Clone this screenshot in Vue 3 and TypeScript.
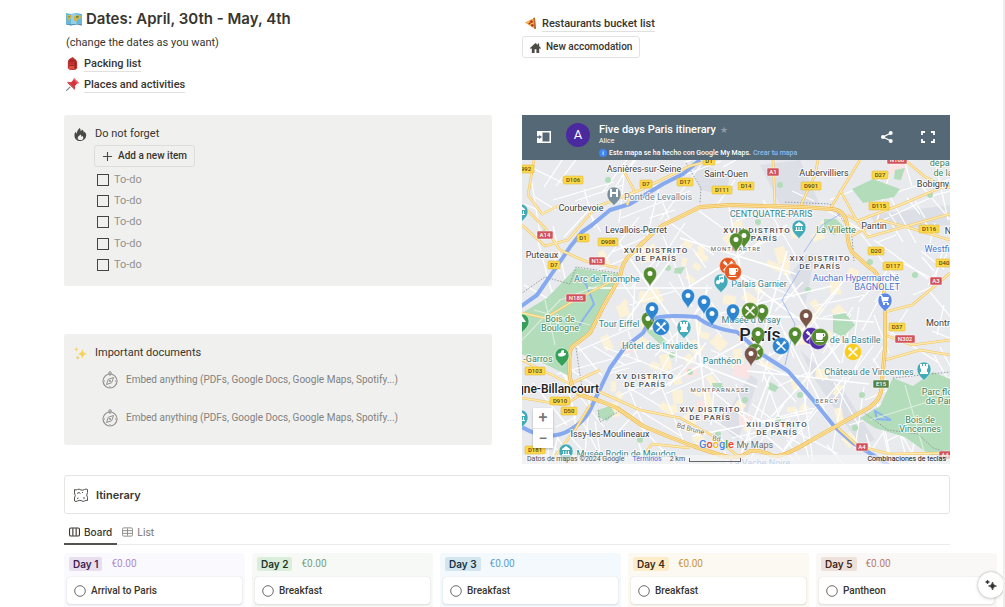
<script setup lang="ts">
type Point = [number, number]
interface Marker { x: number; y: number; color: string; kind: 'pin' | 'fork' | 'cup' | 'dot' }
interface Place { x: number; y: number; color: string; icon: string }
interface Label { x: number; y: number; text: string; kind: string }
interface Shield { x: number; y: number; text: string; color?: string }
interface Day { name: string; total: string; item: string; tone: string }

const todos = [1, 2, 3, 4, 5]
const embeds = [1, 2]
const days: Day[] = [
  { name: 'Day 1', total: '€0.00', item: 'Arrival to Paris', tone: 'purple' },
  { name: 'Day 2', total: '€0.00', item: 'Breakfast', tone: 'green' },
  { name: 'Day 3', total: '€0.00', item: 'Breakfast', tone: 'blue' },
  { name: 'Day 4', total: '€0.00', item: 'Breakfast', tone: 'yellow' },
  { name: 'Day 5', total: '€0.00', item: 'Pantheon', tone: 'brown' },
]

// Minor streets: a repeatable mesh of short segments following a few headings.
let seed = 17
const rand = (): number => {
  seed = (seed * 16807) % 2147483647
  return seed / 2147483647
}
const headings = [0.35, -0.5, 1.15, -1.1, 0.8, 1.6]
const streets: string = Array.from({ length: 210 }, () => {
  const x = 522 + rand() * 428
  const y = 160 + rand() * 304
  const a = headings[Math.floor(rand() * headings.length)] + rand() * 0.3
  const l = 18 + rand() * 60
  return `M${x.toFixed(0)} ${y.toFixed(0)}l${(Math.cos(a) * l).toFixed(0)} ${(Math.sin(a) * l).toFixed(0)}`
}).join('')
const blocks: { x: number; y: number; w: number; h: number; a: number }[] = Array.from({ length: 80 }, () => ({
  x: 600 + rand() * 250, y: 215 + rand() * 220, w: 5 + rand() * 12, h: 4 + rand() * 8, a: rand() * 90,
}))

const squares: Point[] = [[672, 355], [690, 372], [745, 400], [800, 395], [862, 395], [778, 420], [668, 268], [758, 222], [915, 275], [808, 290], [870, 262], [930, 195], [780, 185], [608, 180], [545, 232], [640, 440], [718, 434], [855, 428]]

const stars: Point[] = [[650, 288], [738, 256], [773, 300], [812, 318], [701, 365], [752, 424], [808, 377]]
const avenues: string = stars.map(([x, y], i) =>
  [0, 1, 2, 3, 4, 5].map(k => {
    const a = k * 1.05 + i * 0.37
    return `M${x} ${y}l${(Math.cos(a) * 62).toFixed(0)} ${(Math.sin(a) * 50).toFixed(0)}`
  }).join('')).join('')

const ring = 'M653 233L630 255Q622 262 620 277L603 307L590 333L572 347Q568 352 570 378Q572 390 580 395L600 401L617 408L643 426L667 436L693 446L720 455Q738 461 750 451Q762 450 773 456Q782 458 810 441L833 428L863 411Q878 404 881 392L885 348L885 310Q886 290 880 283Q878 272 870 268L852 252Q847 244 847 225Q845 209 830 209L803 207L730 205L700 207Q684 215 663 225Z'

const arterials = [
  'M773 160L775 205', 'M860 160L830 209', 'M950 273L930 290L912 305L885 312', 'M905 160L925 177L950 188',
  'M847 215L857 221L900 205L950 184', 'M840 190L857 221', 'M857 221L868 237L950 214',
  'M522 205L545 228L560 250L585 261L618 268', 'M522 225L545 246L568 240L596 207L640 190L690 166L712 160',
  'M522 313L545 318L575 300L620 277', 'M534 160L528 195L542 214L560 205', 'M623 170L634 190L627 205',
  'M522 360L570 384L600 370', 'M522 398L565 405L580 395', 'M552 460L575 430L590 405',
  'M600 392L640 410L680 418L715 437L740 458', 'M640 460L652 444L690 448', 'M838 428L858 446L890 454L950 453',
  'M885 360L920 350L950 355', 'M885 335L912 345L950 340', 'M852 236L880 220L910 228L950 240', 'M800 207L815 175L818 160',
]

const markers: Marker[] = [
  { x: 744, y: 249, color: '#558b2f', kind: 'pin' },
  { x: 736, y: 253, color: '#558b2f', kind: 'pin' },
  { x: 650, y: 287, color: '#558b2f', kind: 'pin' },
  { x: 728, y: 266, color: '#e65a20', kind: 'fork' },
  { x: 733, y: 272, color: '#e65a20', kind: 'cup' },
  { x: 688, y: 309, color: '#2d85d0', kind: 'pin' },
  { x: 704, y: 315, color: '#2d85d0', kind: 'pin' },
  { x: 712, y: 327, color: '#2d85d0', kind: 'pin' },
  { x: 733, y: 324, color: '#2d85d0', kind: 'pin' },
  { x: 648, y: 332, color: '#558b2f', kind: 'pin' },
  { x: 652, y: 322, color: '#2d85d0', kind: 'pin' },
  { x: 661, y: 327, color: '#2d85d0', kind: 'fork' },
  { x: 762, y: 324, color: '#558b2f', kind: 'pin' },
  { x: 750, y: 311, color: '#558b2f', kind: 'fork' },
  { x: 758, y: 347, color: '#558b2f', kind: 'pin' },
  { x: 755, y: 352, color: '#558b2f', kind: 'fork' },
  { x: 751, y: 367, color: '#795548', kind: 'pin' },
  { x: 781, y: 346, color: '#2d85d0', kind: 'fork' },
  { x: 795, y: 347, color: '#558b2f', kind: 'pin' },
  { x: 806, y: 329, color: '#795548', kind: 'pin' },
  { x: 811, y: 336, color: '#512da8', kind: 'fork' },
  { x: 818, y: 341, color: '#512da8', kind: 'dot' },
  { x: 820, y: 337, color: '#558b2f', kind: 'cup' },
  { x: 853, y: 352, color: '#f9cb1c', kind: 'fork' },
]

const tower = 'M-4 -17h2v2h1v-2h2v2h1v-2h2v4l-1 1v3h1v2h-8v-2h1v-3l-1-1z'
const museum = 'M-4 -14l4-3 4 3v1h-8zM-3 -12h1v3h-1zM-.5 -12h1v3h-1zM2 -12h1v3h-1zM-4 -9h8v1h-8z'
const places: Place[] = [
  { x: 614, y: 206, color: '#78909c', icon: 'M-4 -17h2v3h4v-3h2v8h-2v-3h-4v3h-2z' },
  { x: 799, y: 239, color: '#43aab8', icon: museum },
  { x: 721, y: 293, color: '#43aab8', icon: 'M-2 -17l5-1v6a2 2 0 1 1-1-2v-2l-3 .5v5a2 2 0 1 1-1-2z' },
  { x: 684, y: 339, color: '#43aab8', icon: tower },
  { x: 924, y: 381, color: '#43aab8', icon: tower },
  { x: 521, y: 223, color: '#43aab8', icon: museum },
  { x: 521, y: 429, color: '#43aab8', icon: museum },
  { x: 566, y: 463, color: '#43aab8', icon: museum },
  { x: 885, y: 312, color: '#5a86ea', icon: 'M-5 -17h2l1 2h6l-1 4h-5l1 1h4v1h-5l-1-2-1-5h-1zM-2 -9h2v2h-2zM2 -9h2v2h-2z' },
  { x: 562, y: 367, color: '#34a05a', icon: 'M-4 -12c0-3 3-1 3-3s3-3 3-1-1 2 2 2c1 3-7 5-8 2z' },
  { x: 522, y: 333, color: '#34a05a', icon: 'M0 -17l4 6h-8z' },
]

const labels: Label[] = [
  { x: 644, y: 172, text: 'Asnières-sur-Seine', kind: 'town' },
  { x: 726, y: 177, text: 'Saint-Ouen', kind: 'town' },
  { x: 824, y: 176, text: 'Aubervilliers', kind: 'town' },
  { x: 933, y: 187, text: 'Bobigny', kind: 'town' },
  { x: 581, y: 211, text: 'Courbevoie', kind: 'town' },
  { x: 636, y: 233, text: 'Levallois-Perret', kind: 'town' },
  { x: 542, y: 258, text: 'Puteaux', kind: 'town' },
  { x: 874, y: 229, text: 'Pantin', kind: 'town' },
  { x: 948, y: 234, text: 'N', kind: 'town' },
  { x: 945, y: 326, text: 'Montreuil', kind: 'town' },
  { x: 610, y: 437, text: 'Issy-les-Moulineaux', kind: 'town' },
  { x: 558, y: 393, text: 'gne-Billancourt', kind: 'city' },
  { x: 760, y: 341, text: 'París', kind: 'capital' },
  { x: 658, y: 200, text: 'Pont de Levallois', kind: 'transit' },
  { x: 656, y: 253, text: 'XVII DISTRITO', kind: 'district' },
  { x: 656, y: 261, text: 'DE PARÍS', kind: 'district' },
  { x: 757, y: 233, text: 'XVIII DISTRITO', kind: 'district' },
  { x: 757, y: 241, text: 'DE PARÍS', kind: 'district' },
  { x: 820, y: 261, text: 'XIX DISTRITO', kind: 'district' },
  { x: 820, y: 269, text: 'DE PARÍS', kind: 'district' },
  { x: 645, y: 379, text: 'XV DISTRITO', kind: 'district' },
  { x: 645, y: 387, text: 'DE PARÍS', kind: 'district' },
  { x: 710, y: 412, text: 'XIV DISTRITO', kind: 'district' },
  { x: 710, y: 420, text: 'DE PARÍS', kind: 'district' },
  { x: 777, y: 427, text: 'XIII DISTRITO', kind: 'district' },
  { x: 777, y: 435, text: 'DE PARÍS', kind: 'district' },
  { x: 736, y: 251, text: 'MONTMARTRE', kind: 'area' },
  { x: 720, y: 392, text: 'MONTPARNASSE', kind: 'area' },
  { x: 827, y: 403, text: 'BERCY', kind: 'area' },
  { x: 771, y: 217, text: 'CENTQUATRE-PARIS', kind: 'poi' },
  { x: 607, y: 282, text: 'Arc de Triomphe', kind: 'poi' },
  { x: 759, y: 287, text: 'Palais Garnier', kind: 'poi' },
  { x: 619, y: 327, text: 'Tour Eiffel', kind: 'poi' },
  { x: 660, y: 349, text: 'Hôtel des Invalides', kind: 'poi' },
  { x: 751, y: 323, text: "Musée d'Orsay", kind: 'poi' },
  { x: 849, y: 343, text: 'Pl. de la Bastille', kind: 'poi' },
  { x: 722, y: 364, text: 'Panthéon', kind: 'poi' },
  { x: 869, y: 375, text: 'Château de Vincennes', kind: 'poi' },
  { x: 626, y: 457, text: 'Musée Rodin de Meudon', kind: 'poi' },
  { x: 836, y: 233, text: 'La Villette', kind: 'park' },
  { x: 560, y: 322, text: 'Bois de', kind: 'park' },
  { x: 560, y: 331, text: 'Boulogne', kind: 'park' },
  { x: 538, y: 362, text: '-Garros', kind: 'park' },
  { x: 920, y: 423, text: 'Bois de', kind: 'park' },
  { x: 920, y: 432, text: 'Vincennes', kind: 'park' },
  { x: 942, y: 395, text: 'Parc floral', kind: 'park' },
  { x: 942, y: 404, text: 'de Paris', kind: 'park' },
  { x: 944, y: 166, text: 'départ.', kind: 'park' },
  { x: 943, y: 176, text: 'de la', kind: 'park' },
  { x: 856, y: 281, text: 'Auchan Hypermarché', kind: 'shop' },
  { x: 877, y: 290, text: 'BAGNOLET', kind: 'shop' },
  { x: 943, y: 252, text: 'Westfield', kind: 'shop' },
  { x: 760, y: 466, text: 'La Vache Noire', kind: 'shop' },
]

const shields: Shield[] = [
  { x: 526, y: 169, text: '992' }, { x: 573, y: 180, text: 'D106' }, { x: 646, y: 184, text: 'D7' },
  { x: 685, y: 182, text: 'D17' }, { x: 709, y: 161, text: 'D1' }, { x: 722, y: 190, text: 'D111' },
  { x: 746, y: 186, text: 'D14' }, { x: 773, y: 172, text: 'A1', color: 'red' }, { x: 811, y: 186, text: 'D901' },
  { x: 880, y: 175, text: 'D27' }, { x: 897, y: 160, text: 'N186', color: 'red' }, { x: 879, y: 206, text: 'D115' },
  { x: 929, y: 229, text: 'D116' }, { x: 545, y: 235, text: 'A14', color: 'red' }, { x: 583, y: 238, text: 'D1' },
  { x: 608, y: 242, text: 'D908' }, { x: 554, y: 265, text: 'D7' }, { x: 597, y: 261, text: 'N13', color: 'red' },
  { x: 576, y: 298, text: 'N185', color: 'red' }, { x: 876, y: 251, text: 'D20' }, { x: 893, y: 266, text: 'D117' },
  { x: 944, y: 263, text: 'D40' }, { x: 936, y: 281, text: 'A3', color: 'red' }, { x: 897, y: 327, text: 'D37' },
  { x: 905, y: 339, text: 'N302', color: 'red' }, { x: 535, y: 371, text: 'D103' }, { x: 560, y: 401, text: 'D910' },
  { x: 569, y: 411, text: 'D50' }, { x: 535, y: 450, text: 'D181' }, { x: 881, y: 384, text: 'E15', color: 'green' },
  { x: 862, y: 447, text: 'A4', color: 'red' }, { x: 945, y: 455, text: 'A4', color: 'red' },
]
</script>

<template>
  <main class="page">
    <section class="intro">
      <div>
        <h2 class="dates">
          <svg class="map-emoji" viewBox="0 0 16 14" aria-hidden="true">
            <path d="M0 1l5 1 5.500-1L16 2v11l-5.500-1L5 13l-5-1z" fill="#68b7dd" />
            <path d="M5 2l5.500-1v11L5 13z" fill="#94cfe8" />
            <path d="M1 3l4 0 1 2-2 2-1 3-1-3-1-2zM8 4l3-1 4 1-1 3-2 0-1 2-2 1-1-3z" fill="#d4b64f" />
            <path d="M2 4l2 0-1 2zM10 4l3 0-1 2-2 0z" fill="#718b42" />
            <path d="M0 12l5 .5 5.500-.5 5.500.5v1l-5.500-1-5.500 1-5-1z" fill="#397899" />
          </svg>
          Dates: April, 30th - May, 4th
        </h2>
        <p class="hint">(change the dates as you want)</p>
        <p class="page-link">
          <svg viewBox="0 0 14 14" aria-hidden="true">
            <path d="M5 2q2-3 4 0" fill="none" stroke="#8f1d1d" />
            <path d="M2 12V6q0-5 5-5 5 1 5 6v5q-1 2-5 2-4 0-5-2z" fill="#bd2f2c" />
            <path d="M3 8h6v5H3z" fill="#dc4d43" /><path d="M3 9h6M4 4h5M10 4v8" stroke="#8c2020" fill="none" />
          </svg>
          <a href="#packing">Packing list</a>
        </p>
        <p class="page-link">
          <svg viewBox="0 0 14 14" aria-hidden="true">
            <path d="M4.500 9.500L0 14" stroke="#7f868b" stroke-width="1.200" />
            <path d="M8.500 0L14 5.500l-2 .5-2.500 2.500.5 3.500-8-8 3.500.5L8 2z" fill="#d9343b" />
            <path d="M8.500 0L14 5.500l-1.500.500-4-4z" fill="#f16b6d" /><path d="M2 4l8 8-1 .500L1.500 5z" fill="#a9232b" />
          </svg>
          <a href="#places">Places and activities</a>
        </p>
      </div>
      <div class="intro-right">
        <p class="page-link">
          <svg viewBox="0 0 14 14" aria-hidden="true">
            <path d="M1 6L11 1l1 12z" fill="#eead43" /><path d="M10 1q2-1 2 1l1 10q-1 2-2 0z" fill="#b96a2c" />
            <path d="M3 6l7-3 .5 8z" fill="#f0bb50" /><circle cx="8" cy="5" r="1.500" fill="#bf3525" />
            <circle cx="6" cy="7" r="1.200" fill="#bf3525" /><circle cx="9" cy="9" r="1.400" fill="#bf3525" />
          </svg>
          <a href="#restaurants">Restaurants bucket list</a>
        </p>
        <button class="button" type="button">
          <svg viewBox="0 0 12 12" aria-hidden="true"><path d="M6 1L0 6.500l1 1L2 6.700V12h3V8h2v4h3V6.700l1 .800 1-1-2-1.800V1.500H8.500v1.700z" fill="#4d4b46" /></svg>
          New accomodation
        </button>
      </div>
    </section>

    <section class="columns">
      <div class="callouts">
        <section class="callout">
          <h3 class="callout-title">
            <svg viewBox="0 0 14 14" aria-hidden="true"><path d="M6 0c1 1 1.500 2 1 3.500C8 3 8.500 2.500 8.500 1.500c2 1 2 2 2 3.500l1-1C13 6 13.500 7 13 9c-.5 3-3 5-6 5-4 0-6.500-2.500-6.500-6 0-2 .500-3 1.500-4 0 1 .500 1.500 1 2C3 3.500 4.500 1.500 6 0zM7.500 7C5 8.500 4 9.500 4 11c0 1 1 2 3 2s3-1 3-2.500c0-1-.5-1.500-1-2L8 9.500C7.500 8.500 8 8 7.500 7z" fill="#4a4844" fill-rule="evenodd" /></svg>
            Do not forget
          </h3>
          <button class="button add" type="button">
            <svg viewBox="0 0 12 12" aria-hidden="true"><path d="M6 1v10M1 6h10" stroke="#4a4844" stroke-width="1.200" /></svg>
            Add a new item
          </button>
          <ul class="todos">
            <li v-for="todo in todos" :key="todo">
              <label><input type="checkbox" /> To-do</label>
            </li>
          </ul>
        </section>
        <section class="callout documents">
          <h3 class="callout-title">
            <svg viewBox="0 0 14 14" aria-hidden="true"><path d="M9 2q.5 5 5 5.500Q9.500 8 9 13q-.500-5-5-5.500Q8.500 7 9 2z" fill="#f8d35b" /><path d="M2.500 0q.2 2.300 2.500 2.500Q2.700 2.700 2.500 5 2.300 2.700 0 2.500 2.300 2.300 2.500 0zM4 9q.200 2.300 2.500 2.500Q4.200 11.700 4 14q-.200-2.300-2.500-2.500Q3.800 11.300 4 9z" fill="#f6d26b" /></svg>
            Important documents
          </h3>
          <button v-for="embed in embeds" :key="embed" class="embed" type="button">
            <svg viewBox="0 0 16 18" fill="none" stroke="#92918d" aria-hidden="true">
              <circle cx="8" cy="10" r="7" stroke-width="1.200" /><circle cx="8" cy="2" r="1.300" />
              <path d="M11.500 6.500L9.700 11.700 4.500 13.500 6.300 8.300zM8 4v1M8 15v1M2 10h1M13 10h1" /><circle cx="8" cy="10" r=".7" />
            </svg>
            Embed anything (PDFs, Google Docs, Google Maps, Spotify...)
          </button>
        </section>
      </div>

      <section class="map" aria-label="Five days Paris itinerary">
        <header class="map-header">
          <button class="icon-button" type="button" aria-label="Toggle legend">
            <svg width="14" height="12" viewBox="0 0 14 12"><path d="M0 0h14v12H0zM5.500 1.500v9h7v-9zM2 4l3 2-3 2V6.700H0V5.300h2z" fill="#fff" fill-rule="evenodd" /></svg>
          </button>
          <span class="avatar">A</span>
          <div class="map-heading">
            <h3>Five days Paris itinerary <span class="star">★</span></h3>
            <p class="author">Alice</p>
            <p class="made-with"><span class="info">i</span>Este mapa se ha hecho con Google My Maps. <a href="#create">Crear tu mapa</a></p>
          </div>
          <button class="icon-button share" type="button" aria-label="Share">
            <svg width="12" height="12" viewBox="0 0 12 12"><path d="M10 2L2 6l8 4" fill="none" stroke="#fff" stroke-width="1.300" /><g fill="#fff"><circle cx="9.700" cy="2" r="2" /><circle cx="2" cy="6" r="2" /><circle cx="9.700" cy="10" r="2" /></g></svg>
          </button>
          <button class="icon-button" type="button" aria-label="Full screen">
            <svg width="14" height="12" viewBox="0 0 14 12"><path d="M1 4V1h3M10 1h3v3M13 8v3h-3M4 11H1V8" fill="none" stroke="#fff" stroke-width="1.800" /></svg>
          </button>
        </header>
        <div class="map-body">
          <svg class="map-canvas" viewBox="522 160 428 304" preserveAspectRatio="xMidYMid slice" role="img" aria-label="Map of Paris">
            <defs>
              <path id="pin-shape" d="M0 0C-.500-5-6.500-7-6.500-13.500a6.500 6.500 0 1 1 13 0C6.500-7 .500-5 0 0z" />
              <g id="fork-shape" fill="none" stroke="#fff" stroke-width="1.600" stroke-linecap="round"><path d="M-4 4L3.500-3.500M4 4L-2-2" /><path d="M-4.500-3.500l2 2M-3.500-4.500l2 2" stroke-width="1.200" /><path d="M2-3.500l2-1.500M3.500-2L5-4" stroke-width="1" /></g>
              <path id="cup-shape" d="M-4-4h8q1.500 0 1.500 2T3 0q0 3-2 3h-3q-2 0-2-2zM3-3v2h1v-2zM-4.500 4h8v1h-8z" fill="#fff" fill-rule="evenodd" />
            </defs>
            <rect x="522" y="160" width="428" height="304" fill="#e8eaee" />
            <path d="M760 165l40-5 20 45-40 0zM870 215l80-10v20l-70 5zM690 160l40 15-5 20-25-5zM790 275l15-20 10 0-10 50zM800 350l40 35 35 55-15 5-45-65zM720 425l30-50 8 5-20 60z" fill="#dcdfe5" />
            <g fill="#fbf2d8">
              <rect v-for="(b, i) in blocks" :key="i" :x="b.x" :y="b.y" :width="b.w" :height="b.h" :transform="`rotate(${b.a} ${b.x} ${b.y})`" />
            </g>
            <g fill="#fbe5e4"><path d="M622 344l12-4 3 11-12 3zM683 369l12-3 4 9-13 3zM735 362l16 3-2 14-17-4zM739 415l12 0 0 12-12 0zM697 400l9 2-2 10-8-2zM889 160l20 3-5 15-14-5z" /></g>
            <path :d="streets" fill="none" stroke="#fff" stroke-width="1.200" />
            <g fill="#b2dcba">
              <path d="M522 313l25-15 29-30 43 6-15 33-18 28-17 13 2 29-22-11-27-12z" />
              <path d="M893 378l20 8 20-14 17 7v77l-20-1-25-18-30-9-15-10 20-12z" />
              <path d="M852 189l21-10 27 10-6 8-31 6z" /><path d="M833 315l12-2 10 12-12 12-10-5z" />
              <path d="M824 219l12 0 10 10-12 6-10-8zM598 410l12-4 5 7-8 8-9-4zM675 268l10-1-4 7-7-1zM646 331l10-2 10 13-5 3zM895 170l10-2-4 12-7-1zM770 382l9 5-4 5-7-3zM712 383l10 0 2 8-10-1z" />
              <circle v-for="([x, y], i) in squares" :key="i" :cx="x" :cy="y" r="3" />
            </g>
            <path d="M578 277l8 7 8 20-10 14-5 8M875 411l16 9-14-1z" fill="none" stroke="#8ab2f0" stroke-width="2" />
            <path :d="avenues" fill="none" stroke="#fff" stroke-width="1.600" />
            <path d="M522 340L560 300L600 285M545 300L555 345M870 420L950 395M905 385L925 455M534 310L590 325" fill="none" stroke="#d9eedb" stroke-width="1.200" />
            <path d="M618 273l-42-6-6 17-25-7-23 16M893 378l57-6M863 412l25 18 30 4 15 14 17 5M686 163l15 25-1 15M598 410l2 12 22-12M785 202l45 2 16 20M576 348l6 40M852 236l2 25" fill="none" stroke="#85888d" stroke-width=".8" stroke-dasharray="1.500 1.500" />
            <g fill="none" stroke="#86a9ef" stroke-linejoin="round">
              <path d="M700 160L683 174L663 184L630 204L610 210L592 225L582 232L570 247L553 272L537 295L520 307" stroke-width="4" />
              <path d="M520 426Q548 443 570 430Q584 422 590 410L610 368L625 347L643 333L650 320Q662 314 697 317Q710 328 737 332L763 355L788 371L813 400L833 425L853 443L873 455L890 466" stroke-width="4" />
              <path d="M800 270L782 300L795 324L785 365M804 252l18-27 22-13" stroke-width="1" stroke-opacity=".7" />
            </g>
            <g fill="none" stroke-linejoin="round">
              <path v-for="(d, i) in arterials" :key="'c' + i" :d="d" stroke="#f3c35c" stroke-width="2.500" />
              <path v-for="(d, i) in arterials" :key="'f' + i" :d="d" stroke="#fdeab0" stroke-width="1.400" />
              <path :d="ring" stroke="#efb94f" stroke-width="4" />
              <path :d="ring" stroke="#fce4a0" stroke-width="2.600" />
              <path :d="ring" stroke="#efb94f" stroke-width=".6" />
            </g>
            <g v-for="s in shields" :key="s.text + s.x">
              <rect class="shield" :class="s.color" :x="s.x - s.text.length * 2 - 2" :y="s.y - 4" :width="s.text.length * 4 + 4" height="8" rx="1" />
              <text class="shield-text" :class="s.color" :x="s.x" :y="s.y + 2">{{ s.text }}</text>
            </g>
            <g v-for="p in places" :key="p.x + '-' + p.y" :transform="`translate(${p.x} ${p.y})`">
              <path d="M0 0C-1-3-7-5-7-12a7 7 0 1 1 14 0C7-5 1-3 0 0z" :fill="p.color" stroke="#fff" stroke-width=".5" />
              <path :d="p.icon" fill="#fff" />
            </g>
            <text class="label road" x="690" y="431" transform="rotate(15 690 431)">Bd Brune</text>
            <text class="label road" x="716" y="441" transform="rotate(10 716 441)">Bd</text>
            <text v-for="l in labels" :key="l.text + l.x + l.y" class="label" :class="l.kind" :x="l.x" :y="l.y">{{ l.text }}</text>
            <g v-for="(m, i) in markers" :key="i" :transform="`translate(${m.x} ${m.y})`">
              <template v-if="m.kind === 'pin'">
                <use href="#pin-shape" :fill="m.color" stroke="#fff" stroke-opacity=".5" stroke-width=".6" /><circle cy="-13.500" r="2.500" fill="#fff" />
              </template>
              <template v-else>
                <circle r="8.500" :fill="m.color" stroke="#fff" stroke-opacity=".6" stroke-width=".6" />
                <use v-if="m.kind === 'fork'" href="#fork-shape" />
                <use v-if="m.kind === 'cup'" href="#cup-shape" />
              </template>
            </g>
          </svg>
          <div class="zoom">
            <button type="button" aria-label="Zoom in">+</button>
            <button type="button" aria-label="Zoom out">−</button>
          </div>
          <div class="brand"><b class="b">G</b><b class="r">o</b><b class="y">o</b><b class="b">g</b><b class="g">l</b><b class="r">e</b> <span>My Maps</span></div>
          <footer class="map-footer">
            <span>Datos de mapas ©2024 Google</span><a href="#terms">Términos</a><span>2 km</span><span class="scale"></span>
            <button type="button">Combinaciones de teclas</button>
          </footer>
        </div>
      </section>
    </section>

    <h3 class="itinerary">
      <svg viewBox="0 0 16 14" fill="none" stroke="#55534e" aria-hidden="true"><path d="M1.500 1.500q1.500 1 3 0t3.500.5q2 .500 3.500-.5t3 0v3l-.8 2.500.8 2.500v3q-1.500-.500-3 .500t-3.500-.500q-2-.500-3.500.500t-3 0v-3l.8-2.500-.8-2.500z" /><path d="M4 5.500l2-1 1.500 1M9 4.500h1M10 10h2M4 10.500l1.500-.5" /></svg>
      Itinerary
    </h3>
    <nav class="tabs" aria-label="Views">
      <button class="tab active" type="button">
        <svg viewBox="0 0 12 10" fill="none" stroke="currentColor" aria-hidden="true"><rect x=".6" y=".6" width="10.800" height="8.800" rx="1.500" stroke-width="1.200" /><path d="M4.200 1v8M7.800 1v8" stroke-width="1.200" /></svg>
        Board
      </button>
      <button class="tab" type="button">
        <svg viewBox="0 0 12 10" fill="none" stroke="currentColor" aria-hidden="true"><rect x=".5" y=".5" width="11" height="9" rx="1.500" /><path d="M1 3.500h10M1 6.500h10M6 1v8" /></svg>
        List
      </button>
    </nav>
    <section class="board">
      <section v-for="day in days" :key="day.name" class="day" :class="day.tone">
        <header><h4>{{ day.name }}</h4><span class="total">{{ day.total }}</span></header>
        <article class="card">
          <svg viewBox="0 0 12 12" aria-hidden="true"><circle cx="6" cy="6" r="5.300" fill="none" stroke="#6d6b67" /></svg>
          {{ day.item }}
        </article>
      </section>
    </section>
    <button class="assistant" type="button" aria-label="Assistant">
      <svg viewBox="0 0 12 12" aria-hidden="true"><path d="M7.500 3q.5 3.700 4 4-3.500.3-4 4-.500-3.700-4-4 3.500-.300 4-4zM2.500 1q.300 1.800 2 2-1.700.2-2 2-.300-1.800-2-2 1.700-.200 2-2z" fill="#33312e" stroke="#33312e" stroke-width=".7" /></svg>
    </button>
  </main>
</template>

<style>
body { background: #fff; }
</style>

<style scoped>
* { box-sizing: border-box; }
h2, h3, h4, p, ul { margin: 0; padding: 0; font-weight: inherit; font-size: inherit; }
button { font: inherit; color: inherit; background: none; border: 0; padding: 0; margin: 0; cursor: pointer; }
svg { flex: none; display: block; }
.page { position: relative; min-height: 100vh; padding: 0 53px 0 64px; border-right: 2px solid #eeeeed; overflow: hidden; font-family: Roboto, "Liberation Sans", sans-serif; font-size: 11px; line-height: 16px; color: #37352f; }
.intro, .columns { display: grid; grid-template-columns: 1fr 1fr; column-gap: 30px; }
.intro { min-height: 115px; padding-top: 8px; align-items: start; }
.dates { display: flex; align-items: center; gap: 4px; font-family: Inter, sans-serif; font-size: 15px; line-height: 22px; font-weight: 600; white-space: nowrap; }
.map-emoji { width: 16px; height: 14px; margin-left: 2px; }
.hint { margin: 5px 0 2px 2px; }
.page-link { display: flex; align-items: center; gap: 5px; height: 21px; padding-left: 2px; font-weight: 500; }
.page-link svg { width: 13px; height: 13px; }
.page-link a { color: inherit; text-decoration: none; border-bottom: 1px solid #e0e0de; line-height: 15px; }
.intro-right { padding-top: 5px; }
.button { display: inline-flex; align-items: center; gap: 5px; height: 22px; padding: 0 7px; border: 1px solid #e3e2e0; border-radius: 3px; font-size: 10px; font-weight: 500; white-space: nowrap; }
.button svg { width: 11px; height: 11px; }
.intro-right .button { margin-top: 2px; }
.callouts { display: flex; flex-direction: column; gap: 48px; }
.callout { background: #f0f0ee; border-radius: 2px; height: 171px; padding: 11px 10px; }
.documents { height: 111px; }
.callout-title { display: flex; align-items: center; gap: 8px; line-height: 16px; }
.callout-title svg { width: 13px; height: 13px; }
.add { display: flex; width: max-content; margin: 3px 0 0 20px; border-color: #deddda; }
.todos { display: grid; grid-template-rows: repeat(5, 1fr); height: 107px; list-style: none; margin: 2px 0 0 23px; }
.todos label { display: flex; align-items: center; gap: 5px; height: 100%; color: #92918e; }
.todos input { appearance: none; width: 12px; height: 12px; margin: 0; border: 1px solid #454440; }
.embed { display: flex; align-items: center; gap: 8px; height: 38px; margin-left: 28px; font-size: 10px; color: #83827e; white-space: nowrap; }
.embed svg { width: 16px; height: 18px; }
.map { min-width: 0; }
.map-header { height: 45px; background: #546875; color: #fff; display: flex; align-items: flex-start; padding: 8px 15px; }
.icon-button { display: grid; place-items: center; height: 28px; }
.share { margin-left: auto; margin-right: 28px; }
.avatar { width: 24px; height: 24px; border-radius: 50%; background: #4b2aa0; text-align: center; font-size: 13px; line-height: 24px; margin: 0 9px 0 15px; }
.map-heading { white-space: nowrap; }
.map-heading h3 { font-size: 11px; line-height: 14px; font-weight: 500; }
.star { color: #8e9ba4; font-size: 9px; margin-left: 1px; }
.author { font-size: 7px; line-height: 8px; }
.made-with { display: flex; align-items: center; font-size: 7px; line-height: 12px; margin-top: 2px; font-weight: 500; }
.made-with a { color: #8ebcf1; text-decoration: none; margin-left: 2px; }
.info { width: 8px; height: 8px; border-radius: 50%; background: #4285f4; font-size: 6px; line-height: 8px; text-align: center; margin-right: 2px; }
.map-body { position: relative; height: 304px; overflow: hidden; }
.map-canvas { width: 100%; height: 100%; }
.shield { fill: #fbd84c; stroke: #dfb32b; stroke-width: .5; }
.shield.red { fill: #d0535b; stroke: #fff; }
.shield.green { fill: #568447; stroke: #fff; }
.shield-text { font-size: 6px; font-weight: 500; fill: #5b4a12; text-anchor: middle; }
.shield-text.red, .shield-text.green { fill: #fff; }
.label { text-anchor: middle; paint-order: stroke; stroke: #fff; stroke-opacity: .8; stroke-width: 2px; stroke-linejoin: round; fill: #3c4043; font-size: 9px; }
.city { font-size: 12px; font-weight: 500; fill: #202124; }
.capital { font-size: 18px; font-weight: 500; fill: #202124; }
.transit { fill: #6f8491; }
.district { font-size: 8px; letter-spacing: 1px; fill: #4a4e53; font-weight: 500; }
.area { font-size: 6px; letter-spacing: 1px; fill: #5f6368; }
.poi { fill: #34858f; }
.park { fill: #3a855b; }
.shop { fill: #4874cf; }
.road { font-size: 7px; fill: #8b6a3a; }
.zoom { position: absolute; left: 11px; bottom: 16px; width: 20px; background: #fff; box-shadow: 0 1px 2px #0004; }
.zoom button { display: block; width: 20px; height: 20px; color: #777; font-size: 16px; font-weight: 500; line-height: 20px; }
.zoom button + button { border-top: 1px solid #e6e6e6; }
.brand { position: absolute; left: 177px; bottom: 12px; font-size: 10px; line-height: 14px; color: #6c6f73; text-shadow: 0 0 2px #fff; white-space: nowrap; }
.brand b { font-weight: 500; font-size: 11px; }
.brand span { font-size: 9px; }
.b { color: #4285f4; } .r { color: #ea4335; } .y { color: #fbbc05; } .g { color: #34a853; }
.map-footer { position: absolute; left: 0; right: 0; bottom: 0; display: flex; align-items: center; gap: 8px; height: 9px; padding: 0 4px 0 5px; background: #f5f5f5b0; font-size: 7px; line-height: 9px; color: #555; white-space: nowrap; }
.map-footer a { color: #3d73d8; text-decoration: none; }
.map-footer button { margin-left: auto; color: #111; }
.scale { width: 52px; height: 4px; border: 1px solid #666; border-top: 0; margin-left: -4px; }
.itinerary { display: flex; align-items: center; gap: 7px; height: 39px; margin-top: 11px; padding-left: 8px; border: 1px solid #e5e5e3; border-radius: 3px; font-family: Inter, sans-serif; font-weight: 600; }
.itinerary svg { width: 16px; height: 14px; }
.tabs { display: flex; height: 31px; border-bottom: 1px solid #ebebea; font-family: Inter, sans-serif; font-size: 10px; font-weight: 500; }
.tab { display: flex; align-items: center; gap: 4px; height: 31px; padding: 4px 5px 0; color: #878682; }
.tab svg { width: 11px; height: 10px; }
.tab.active { color: #37352f; border-bottom: 2px solid #55534e; padding-top: 6px; }
.board { display: grid; grid-template-columns: repeat(5, minmax(0, 1fr)); gap: 7px; margin: 8px -47px 0 0; }
.day { padding: 3px; border-radius: 3px 3px 0 0; height: 54px; }
.day header { display: flex; align-items: center; gap: 9px; height: 16px; padding-left: 2px; margin-bottom: 5px; }
.day h4 { font-family: Inter, sans-serif; font-size: 10px; line-height: 14px; font-weight: 600; padding: 0 4px; border-radius: 2px; }
.total { font-size: 10px; }
.card { display: flex; align-items: center; gap: 5px; height: 27px; padding-left: 7px; background: #fff; border-radius: 3px; box-shadow: 0 0 1px #0003, 0 1px 2px #0000001a; font-size: 10px; font-weight: 500; }
.card svg { width: 12px; height: 12px; }
.purple { background: #faf9fe; } .purple h4 { background: #e8deee; color: #412454; } .purple .total { color: #ae8bd0; }
.green { background: #f6f9f5; } .green h4 { background: #dbeddb; color: #1c3829; } .green .total { color: #75a083; }
.blue { background: #f3f9fc; } .blue h4 { background: #d3e5ef; color: #183347; } .blue .total { color: #609fce; }
.yellow { background: #fbf9f2; } .yellow h4 { background: #fdecc8; color: #402c1b; } .yellow .total { color: #c6963f; }
.brown { background: #faf8f7; } .brown h4 { background: #eee0da; color: #442a1e; } .brown .total { color: #b87c6c; }
.assistant { position: absolute; right: -1px; bottom: 9px; width: 26px; height: 26px; border-radius: 50%; background: #fff; box-shadow: 0 0 2px #0005, 0 1px 4px #0002; display: grid; place-items: center; }
.assistant svg { width: 12px; height: 12px; }
</style>
